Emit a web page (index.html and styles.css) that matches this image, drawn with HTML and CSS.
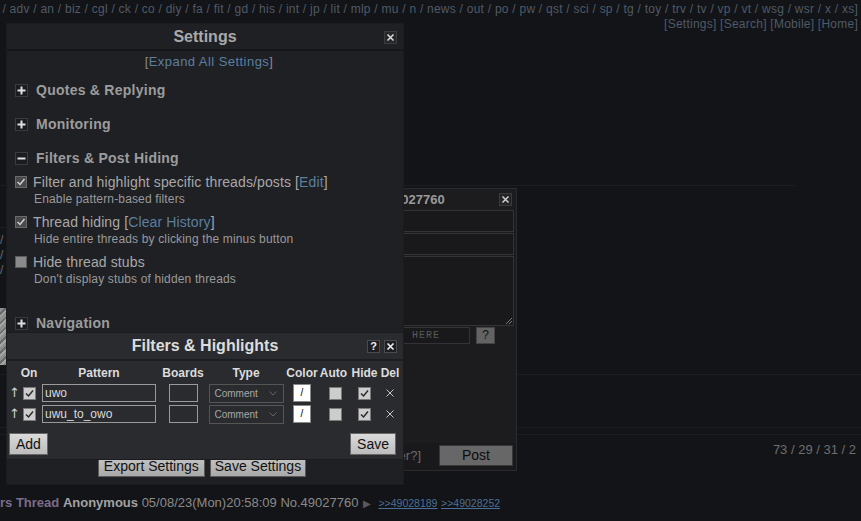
FILE: index.html
```html
<!DOCTYPE html>
<html lang="en">
<head>
<meta charset="utf-8">
<title>Settings</title>
<link rel="stylesheet" href="styles.css">
</head>
<body>
<div class="boardnav">
  <div class="boardlist"><span>/ <a>adv</a> / <a>an</a> / <a>biz</a> / <a>cgl</a> / <a>ck</a> / <a>co</a> / <a>diy</a> / <a>fa</a> / <a>fit</a> / <a>gd</a> / <a>his</a> / <a>int</a> / <a>jp</a> / <a>lit</a> / <a>mlp</a> / <a>mu</a> / <a>n</a> / <a>news</a> / <a>out</a> / <a>po</a> / <a>pw</a> / <a>qst</a> / <a>sci</a> / <a>sp</a> / <a>tg</a> / <a>toy</a> / <a>trv</a> / <a>tv</a> / <a>vp</a> / <a>vt</a> / <a>wsg</a> / <a>wsr</a> / <a>x</a> / <a>xs</a>]</span></div>
  <div class="navlinks">[<a>Settings</a>] [<a>Search</a>] [<a>Mobile</a>] [<a>Home</a>]</div>
</div>

<div class="board">
  <div class="rule rule-thread"></div>
  <div class="rule rule-left"></div>
  <div class="stub-lines"><div>/</div><div>/</div><div>/</div></div>
  <div class="thumb"></div>
  <div class="rule rule-a"></div>
  <div class="rule rule-b"></div>
  <div class="rule rule-c"></div>
  <div class="stats">73 / 29 / 31 / 2</div>
  <div class="postinfo"><span class="subject">rs Thread</span> <span class="name">Anonymous</span> <span class="date">05/08/23(Mon)20:58:09 No.49027760</span><span class="tri">&#9654;</span><span class="backlinks"><a>&gt;&gt;49028189</a> <a>&gt;&gt;49028252</a></span></div>
</div>

<div class="qr">
  <div class="qr-head">
    <span>Reply to Thread No.49027760</span>
    <span class="xbtn"><svg width="13" height="13" viewBox="0 0 13 13"><rect x="0.5" y="0.5" width="12" height="12" fill="#252527" stroke="#3a3a3c"/><path d="M3.5 3.5L9.5 9.5M9.5 3.5L3.5 9.5" stroke="#cfcfcf" stroke-width="1.5"/></svg></span>
  </div>
  <div class="qr-field"></div>
  <div class="qr-field"></div>
  <div class="qr-field qr-area"><svg class="grip" width="7" height="7" viewBox="0 0 7 7"><path d="M1 7L7 1M4 7L7 4" stroke="#777" stroke-width="1"/></svg></div>
  <div class="qr-captcha">
    <div class="captcha-input">TYPE THE CAPTCHA HERE</div>
    <div class="qbtn">?</div>
  </div>
  <div class="qr-spacer"></div>
  <div class="qr-foot">
    <span class="spoiler">[Spoiler?]</span>
    <div class="post-btn">Post</div>
  </div>
</div>

<div class="settings">
  <div class="dlg-head">
    <span>Settings</span>
    <span class="xbtn head-x"><svg width="13" height="13" viewBox="0 0 13 13"><rect x="0.5" y="0.5" width="12" height="12" fill="#262729" stroke="#3b3c3f"/><path d="M3.5 3.5L9.5 9.5M9.5 3.5L3.5 9.5" stroke="#dedede" stroke-width="1.5"/></svg></span>
  </div>
  <div class="settings-body">
    <div class="expand">[<a>Expand All Settings</a>]</div>
    <div class="sec-head"><span class="pm"><svg width="13" height="13" viewBox="0 0 13 13"><rect x="0.5" y="0.5" width="12" height="12" fill="#1b1c1f" stroke="#3a3b3e"/><path d="M2.5 6.5H10.5M6.5 2.5V10.5" stroke="#e0e0e0" stroke-width="2"/></svg></span>Quotes &amp; Replying</div>
    <div class="sec-head"><span class="pm"><svg width="13" height="13" viewBox="0 0 13 13"><rect x="0.5" y="0.5" width="12" height="12" fill="#1b1c1f" stroke="#3a3b3e"/><path d="M2.5 6.5H10.5M6.5 2.5V10.5" stroke="#e0e0e0" stroke-width="2"/></svg></span>Monitoring</div>
    <div class="sec-head"><span class="pm"><svg width="13" height="13" viewBox="0 0 13 13"><rect x="0.5" y="0.5" width="12" height="12" fill="#1b1c1f" stroke="#3a3b3e"/><path d="M2.5 6.5H10.5" stroke="#e0e0e0" stroke-width="2"/></svg></span>Filters &amp; Post Hiding</div>
    <div class="opts">
      <div class="opt">
        <div class="opt-label"><span class="scb on"><svg width="10" height="10" viewBox="0 0 10 10"><path d="M1.5 5L4 7.5L8.5 2" fill="none" stroke="#d0d0d0" stroke-width="1.5"/></svg></span><span>Filter and highlight specific threads/posts [<a class="lnk">Edit</a>]</span></div>
        <div class="opt-desc">Enable pattern-based filters</div>
      </div>
      <div class="opt">
        <div class="opt-label"><span class="scb on"><svg width="10" height="10" viewBox="0 0 10 10"><path d="M1.5 5L4 7.5L8.5 2" fill="none" stroke="#d0d0d0" stroke-width="1.5"/></svg></span><span>Thread hiding [<a class="lnk">Clear History</a>]</span></div>
        <div class="opt-desc">Hide entire threads by clicking the minus button</div>
      </div>
      <div class="opt">
        <div class="opt-label"><span class="scb"></span><span>Hide thread stubs</span></div>
        <div class="opt-desc">Don't display stubs of hidden threads</div>
      </div>
    </div>
    <div class="sec-head nav-head"><span class="pm"><svg width="13" height="13" viewBox="0 0 13 13"><rect x="0.5" y="0.5" width="12" height="12" fill="#1b1c1f" stroke="#3a3b3e"/><path d="M2.5 6.5H10.5M6.5 2.5V10.5" stroke="#e0e0e0" stroke-width="2"/></svg></span>Navigation</div>
  </div>
  <div class="settings-foot">
    <div class="btn btn-export">Export Settings</div>
    <div class="btn btn-savesettings">Save Settings</div>
  </div>
</div>

<div class="filters">
  <div class="dlg-head">
    <span>Filters &amp; Highlights</span>
    <span class="head-tools">
      <span class="help">?</span>
      <span class="xbtn"><svg width="13" height="13" viewBox="0 0 13 13"><rect x="0.5" y="0.5" width="12" height="12" fill="#1e1f22" stroke="#4a4b4e"/><path d="M3.5 3.5L9.5 9.5M9.5 3.5L3.5 9.5" stroke="#f0f0f0" stroke-width="1.6"/></svg></span>
    </span>
  </div>
  <div class="ftable">
    <div></div><div class="th">On</div><div class="th">Pattern</div><div class="th">Boards</div><div class="th">Type</div><div class="th">Color</div><div class="th">Auto</div><div class="th">Hide</div><div class="th">Del</div>

    <div class="arrow">&#8593;</div>
    <span class="fcb"><svg width="11" height="11" viewBox="0 0 11 11"><path d="M2 5.5L4.5 8L9 2.5" fill="none" stroke="#2a2a2a" stroke-width="1.5"/></svg></span>
    <div class="tinput pattern">uwo</div>
    <div class="tinput boards"></div>
    <div class="tsel"><span>Comment</span><svg width="8" height="5" viewBox="0 0 8 5"><path d="M0.5 0.5L4 4L7.5 0.5" fill="none" stroke="#666" stroke-width="1"/></svg></div>
    <div class="colorbtn">/</div>
    <span class="fcb auto"></span>
    <span class="fcb"><svg width="11" height="11" viewBox="0 0 11 11"><path d="M2 5.5L4.5 8L9 2.5" fill="none" stroke="#2a2a2a" stroke-width="1.5"/></svg></span>
    <div class="del"><svg width="8" height="8" viewBox="0 0 8 8"><path d="M0.5 0.5L7.5 7.5M7.5 0.5L0.5 7.5" stroke="#c4c4c4" stroke-width="1"/></svg></div>

    <div class="arrow">&#8593;</div>
    <span class="fcb"><svg width="11" height="11" viewBox="0 0 11 11"><path d="M2 5.5L4.5 8L9 2.5" fill="none" stroke="#2a2a2a" stroke-width="1.5"/></svg></span>
    <div class="tinput pattern">uwu_to_owo</div>
    <div class="tinput boards"></div>
    <div class="tsel"><span>Comment</span><svg width="8" height="5" viewBox="0 0 8 5"><path d="M0.5 0.5L4 4L7.5 0.5" fill="none" stroke="#666" stroke-width="1"/></svg></div>
    <div class="colorbtn">/</div>
    <span class="fcb auto"></span>
    <span class="fcb"><svg width="11" height="11" viewBox="0 0 11 11"><path d="M2 5.5L4.5 8L9 2.5" fill="none" stroke="#2a2a2a" stroke-width="1.5"/></svg></span>
    <div class="del"><svg width="8" height="8" viewBox="0 0 8 8"><path d="M0.5 0.5L7.5 7.5M7.5 0.5L0.5 7.5" stroke="#c4c4c4" stroke-width="1"/></svg></div>
  </div>
  <div class="ffoot">
    <div class="btn btn-light">Add</div>
    <div class="btn btn-light">Save</div>
  </div>
</div>
</body>
</html>
```

FILE: styles.css
```css
* { box-sizing: border-box; }
html, body { margin: 0; padding: 0; }
body {
  width: 861px;
  height: 521px;
  overflow: hidden;
  position: relative;
  background: #131417;
  font-family: "Liberation Sans", Arial, Helvetica, sans-serif;
  color: #888;
}
a { color: inherit; text-decoration: none; }

/* ---------- page behind ---------- */
.boardnav {
  padding: 2px 3px 0 0;
  font-size: 12px;
  line-height: 15px;
  letter-spacing: 0.24px;
  color: #4f5a67;
}
.boardlist {
  display: flex;
  justify-content: flex-end;
  overflow: hidden;
  white-space: nowrap;
}
.navlinks { text-align: right; white-space: nowrap; }

.board { display: flex; flex-direction: column; }
.rule { height: 1px; background: #1d1e21; flex: none; }
.rule-thread { margin-top: 153px; width: 795px; }
.rule-left { margin-top: 41px; width: 420px; }
.stub-lines {
  margin-top: 5px;
  font-size: 12px;
  line-height: 15px;
  color: #6c6c6c;
}
.thumb {
  margin-top: 30px;
  width: 40px;
  height: 57px;
  background: repeating-linear-gradient(135deg, #8e8e8e 0 3px, #6a6a6a 3px 5px, #a4a4a4 5px 7px);
}
.rule-a { margin-top: 9px; }
.rule-b { margin-top: 52px; }
.rule-c { margin-top: 6px; }
.stats {
  margin-top: 7px;
  line-height: 16px;
  font-size: 13px;
  text-align: right;
  padding-right: 5px;
  color: #6e6e6e;
}
.postinfo {
  margin-top: 36px;
  line-height: 18px;
  font-size: 13px;
  white-space: nowrap;
}
.subject { color: #7c6c8a; font-weight: bold; }
.name { color: #a2a2a2; font-weight: bold; }
.date { color: #8a8a8a; }
.tri { color: #5a5a5a; font-size: 10px; margin: 0 7px 0 5px; }
.backlinks a { color: #4b6f96; text-decoration: underline; font-size: 10.5px; }

/* ---------- quick reply ---------- */
.qr {
  position: absolute;
  left: 255px;
  top: 188px;
  width: 262px;
  height: 283px;
  background: #1c1c1e;
  border: 1px solid #2b2b2d;
  display: flex;
  flex-direction: column;
}
.qr-head {
  height: 21px;
  flex: none;
  display: flex;
  align-items: center;
  justify-content: space-between;
  padding: 0 4px 0 8px;
  font-weight: bold;
  font-size: 13px;
  color: #9a9a9a;
}
.xbtn { display: flex; width: 13px; height: 13px; }
.qr-field {
  flex: none;
  height: 22px;
  margin: 0 2px 1px 2px;
  border: 1px solid #333335;
  background: #19191b;
  position: relative;
}
.qr-area { height: 70px; }
.grip { position: absolute; right: 1px; bottom: 1px; }
.qr-captcha {
  flex: none;
  display: flex;
  align-items: stretch;
  height: 17px;
  padding-right: 21px;
}
.captcha-input {
  margin-left: auto;
  width: 180px;
  border: 1px solid #333335;
  background: #19191b;
  font-family: "Liberation Mono", "DejaVu Sans Mono", monospace;
  font-size: 10px;
  letter-spacing: 1px;
  line-height: 15px;
  padding-left: 2px;
  color: #5a5a5a;
  white-space: nowrap;
  overflow: hidden;
}
.qbtn {
  margin-left: 6px;
  width: 19px;
  background: #636363;
  border: 1px solid #444;
  color: #111;
  font-size: 12px;
  line-height: 15px;
  text-align: center;
}
.qr-spacer { flex: 1; }
.qr-foot {
  flex: none;
  display: flex;
  align-items: center;
  justify-content: flex-end;
  gap: 18px;
  height: 27px;
  padding: 0 3px 2px 0;
  background: #19191b;
}
.spoiler { font-size: 13px; color: #6a6a6a; }
.post-btn {
  width: 74px;
  height: 21px;
  background: #676767;
  border: 1px solid #383838;
  color: #0c0c0c;
  font-size: 14px;
  line-height: 19px;
  text-align: center;
}

/* ---------- dialogs ---------- */
.dlg-head {
  position: relative;
  flex: none;
  display: flex;
  align-items: center;
  justify-content: center;
  font-weight: bold;
  font-size: 16px;
}

.settings {
  position: absolute;
  left: 6px;
  top: 23px;
  width: 398px;
  height: 462px;
  background: #1f2024;
  border: 1px solid #1a1b1e;
  display: flex;
  flex-direction: column;
}
.settings .dlg-head {
  height: 27px;
  color: #a9a9a9;
  border-bottom: 2px solid #151619;
}
.head-x { position: absolute; right: 6px; top: 7px; }

.settings-body { flex: 1; overflow: hidden; padding-left: 8px; }
.expand {
  margin-top: 3px;
  line-height: 16px;
  font-size: 13px;
  letter-spacing: 0.45px;
  text-align: center;
  color: #8a8a8a;
}
.expand a, .lnk { color: #5b7f9f; }

.sec-head {
  margin-top: 10px;
  height: 20px;
  display: flex;
  align-items: center;
  gap: 8px;
  font-weight: bold;
  font-size: 14px;
  letter-spacing: 0.25px;
  color: #9c9c9c;
}
.sec-head + .sec-head { margin-top: 14px; }
.pm { display: flex; width: 13px; height: 13px; }
.opts { margin-top: 6px; }
.opt + .opt { margin-top: 8px; }
.opt-label {
  display: flex;
  align-items: center;
  gap: 6px;
  font-size: 14px;
  line-height: 16px;
  letter-spacing: 0.12px;
  color: #a8a8a8;
}
.scb {
  width: 12px;
  height: 12px;
  flex: none;
  display: flex;
  align-items: center;
  justify-content: center;
  background: #8a8a8a;
  border: 1px solid #5c5c5c;
}
.scb.on { background: #4a4a4c; border-color: #6a6a6a; }
.opt-desc {
  margin: 2px 0 0 19px;
  font-size: 12px;
  line-height: 14px;
  letter-spacing: 0.15px;
  color: #9a9a9a;
}
.nav-head.sec-head { margin-top: 27px; }

.settings-foot {
  flex: none;
  display: flex;
  justify-content: center;
  gap: 5px;
  padding: 0 6px 7px 0;
}
.btn {
  height: 21px;
  font-size: 14px;
  line-height: 19px;
  color: #111;
  background: linear-gradient(#c4c4c4, #a9a9a9);
  border: 1px solid #5a5a5a;
  text-align: center;
}
.btn-export { padding: 0 5px; }
.btn-savesettings { padding: 0 4px; }

.filters {
  position: absolute;
  left: 6px;
  top: 332px;
  width: 398px;
  height: 128px;
  background: #2a2b2f;
  border: 1px solid #1b1c1f;
}
.filters .dlg-head {
  height: 28px;
  color: #dcdcdc;
  border-bottom: 2px solid #1c1d20;
}
.head-tools {
  position: absolute;
  right: 6px;
  top: 7px;
  display: flex;
  gap: 4px;
}
.help {
  width: 13px;
  height: 13px;
  background: #1e1f22;
  border: 1px solid #4a4b4e;
  color: #f0f0f0;
  font-size: 11px;
  line-height: 11px;
  text-align: center;
  overflow: hidden;
}

.ftable {
  margin-top: 4px;
  padding-left: 2px;
  display: grid;
  grid-template-columns: 11px 18px 122px 46px 80px 32px 31px 31px 20px;
  grid-template-rows: 16px 18px 18px;
  row-gap: 3px;
  align-items: center;
  justify-items: center;
}
.th { font-weight: bold; font-size: 12px; color: #dcdcdc; line-height: 16px; }
.arrow { font-size: 13px; color: #d0d0d0; line-height: 18px; justify-self: start; padding-left: 0; font-family: "DejaVu Sans", sans-serif; }
.fcb {
  width: 13px;
  height: 13px;
  display: flex;
  align-items: center;
  justify-content: center;
  background: #cdcdcd;
  border: 1px solid #7a7a7a;
}
.fcb.auto { margin-left: 4px; }
.tinput {
  height: 18px;
  border: 1px solid #9a9a9a;
  font-size: 12px;
  line-height: 16px;
  color: #dadada;
  padding-left: 2px;
  white-space: nowrap;
}
.pattern { width: 114px; }
.boards { width: 29px; }
.tsel {
  width: 75px;
  height: 19px;
  border: 1px solid #555;
  display: flex;
  align-items: center;
  justify-content: space-between;
  padding: 0 6px 0 5px;
  font-size: 10px;
  color: #a8a8a8;
}
.colorbtn {
  width: 18px;
  height: 18px;
  background: #fff;
  border: 1px solid #888;
  color: #000;
  font-size: 10px;
  line-height: 16px;
  text-align: center;
}
.del { display: flex; width: 8px; height: 8px; }

.ffoot {
  margin-top: 10px;
  display: flex;
  justify-content: space-between;
  padding: 0 7px 0 2px;
}
.btn-light {
  height: 22px;
  line-height: 20px;
  padding: 0 6px;
  background: linear-gradient(#dadada, #bcbcbc);
  border-color: #666;
}
```
